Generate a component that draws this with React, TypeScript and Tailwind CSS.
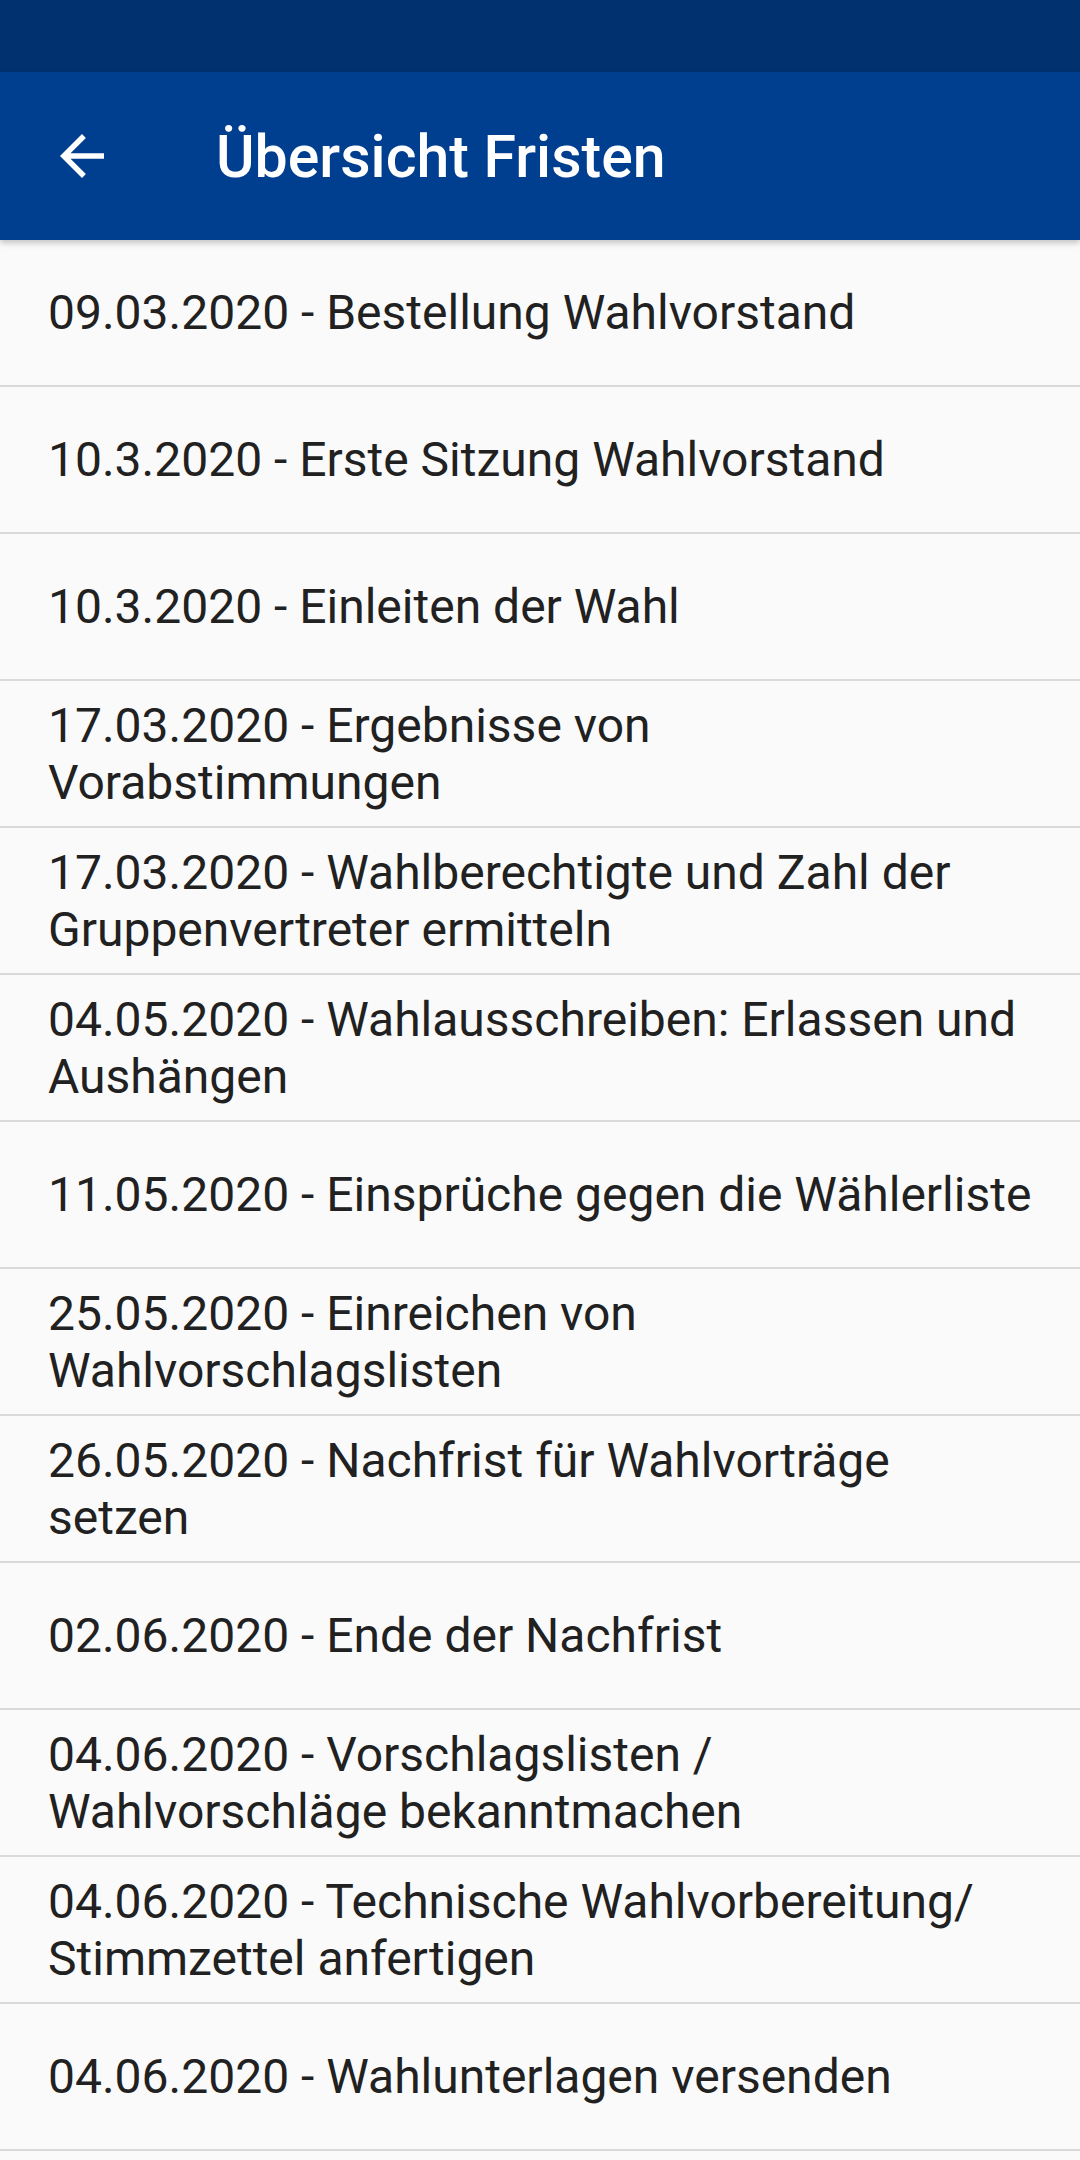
import React from 'react';

const DEADLINES: string[][] = [
  ['09.03.2020 - Bestellung Wahlvorstand'],
  ['10.3.2020 - Erste Sitzung Wahlvorstand'],
  ['10.3.2020 - Einleiten der Wahl'],
  ['17.03.2020 - Ergebnisse von', 'Vorabstimmungen'],
  ['17.03.2020 - Wahlberechtigte und Zahl der', 'Gruppenvertreter ermitteln'],
  ['04.05.2020 - Wahlausschreiben: Erlassen und', 'Aushängen'],
  ['11.05.2020 - Einsprüche gegen die Wählerliste'],
  ['25.05.2020 - Einreichen von', 'Wahlvorschlagslisten'],
  ['26.05.2020 - Nachfrist für Wahlvorträge', 'setzen'],
  ['02.06.2020 - Ende der Nachfrist'],
  ['04.06.2020 - Vorschlagslisten /', 'Wahlvorschläge bekanntmachen'],
  ['04.06.2020 - Technische Wahlvorbereitung/', 'Stimmzettel anfertigen'],
  ['04.06.2020 - Wahlunterlagen versenden'],
];

const App: React.FC = () => {
  return (
    <div className="w-[1080px] h-[2160px] overflow-hidden bg-[#fafafa] font-['Roboto',sans-serif]">
      {/* status bar */}
      <div className="h-[72px] bg-[#01316f]" />

      {/* toolbar */}
      <div className="relative z-10 h-[168px] bg-[#003e8f] flex items-center shadow-[0_3px_6px_rgba(0,0,0,0.22)]">
        <div className="ml-[49px] w-[66px] h-[66px] flex items-center justify-center">
          <svg viewBox="0 0 24 24" className="w-[66px] h-[66px]" fill="#ffffff">
            <path d="M20 11H7.83l5.59-5.59L12 4l-8 8 8 8 1.41-1.41L7.83 13H20v-2z" />
          </svg>
        </div>
        <h1 className="ml-[101px] text-white text-[59px] font-medium leading-none">
          Übersicht Fristen
        </h1>
      </div>

      {/* list */}
      <div className="flex flex-col">
        {DEADLINES.map((lines, idx) => (
          <div
            key={idx}
            className="min-h-[147px] flex flex-col justify-center pl-[48px] pr-[24px] border-b-[2px] border-[#dadada] text-[#212121] text-[48px] leading-[57px]"
          >
            {lines.map((line) => (
              <span key={line} className="whitespace-nowrap">
                {line}
              </span>
            ))}
          </div>
        ))}
        <div className="h-[147px]" />
      </div>
    </div>
  );
};

export default App;
